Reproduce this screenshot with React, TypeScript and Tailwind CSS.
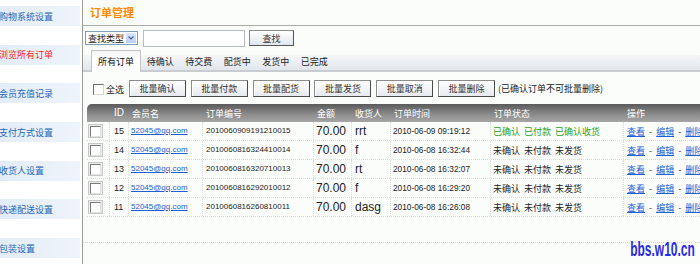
import React from 'react';

const side = ['购物系统设置', '浏览所有订单', '会员充值记录', '支付方式设置', '收货人设置', '快递配送设置', '包装设置'];
const tabs = ['待确认', '待交费', '配货中', '发货中', '已完成'];
const btns = ['批量确认', '批量付款', '批量配货', '批量发货', '批量取消', '批量删除'];
const heads = ['', 'ID', '会员名', '订单编号', '金额', '收货人', '订单时间', '订单状态', '操作'];
const rows = [
  { id: 15, no: '2010060909191210015', name: 'rrt', time: '2010-06-09 09:19:12', done: true },
  { id: 14, no: '2010060816324410014', name: 'f', time: '2010-06-08 16:32:44', done: false },
  { id: 13, no: '2010060816320710013', name: 'rt', time: '2010-06-08 16:32:07', done: false },
  { id: 12, no: '2010060816292010012', name: 'f', time: '2010-06-08 16:29:20', done: false },
  { id: 11, no: '2010060816260810011', name: 'dasg', time: '2010-06-08 16:26:08', done: false },
];

const cols = 'grid grid-cols-[23px_19px_74px_111px_38px_39px_100px_133px_76px]';
const cell = 'h-full flex items-center border-r border-dotted border-[#dcdcdc] overflow-hidden whitespace-nowrap';

function RowBox() {
  return (
    <span className="flex h-[14px] w-[15px] items-center justify-center border border-[#c8c8c8] bg-[#ececec]">
      <span className="block h-[11px] w-[11px] border border-t-[#7a7a7a] border-l-[#7a7a7a] border-b-[#e0e0e0] border-r-[#e0e0e0] bg-white" />
    </span>
  );
}

export default function App() {
  return (
    <div className="relative flex h-[264px] w-[700px] overflow-hidden bg-[#fbfdfb] font-['Liberation_Sans','Noto_Sans_CJK_SC',sans-serif] text-[#222]">
      {/* sidebar */}
      <div className="flex w-[83px] shrink-0 flex-col gap-[18.7px] border-r border-[#9a9a9a] bg-white pt-[6px]">
        {side.map((s, i) => (
          <div
            key={s}
            className={`flex h-[20px] w-[80px] items-center bg-[linear-gradient(to_right,#e3ecf6,#eef4fa)] text-[9px] leading-none ${
              i === 1 ? 'text-[#ff1a1a]' : 'text-[#2566b8]'
            }`}
          >
            <span className="-ml-[1px] font-['Noto_Sans_CJK_SC',sans-serif]">{s}</span>
          </div>
        ))}
      </div>

      {/* main */}
      <div className="flex min-w-0 flex-1 flex-col">
        <div className="flex h-[26px] items-center border-b border-[#ababab] pl-[7px]">
          <span className="font-['Noto_Sans_CJK_SC',sans-serif] text-[11px] font-semibold leading-none text-[#ff8a00]">订单管理</span>
        </div>

        {/* search */}
        <div className="flex h-[24px] items-center pl-[2px] font-['Noto_Sans_CJK_SC',sans-serif] text-[9px] leading-none">
          <div className="flex h-[14px] w-[53px] items-center justify-between border border-[#7f9db9] bg-white pl-[2px] pr-[1px]">
            <span>查找类型</span>
            <span className="flex h-[10px] w-[10px] items-center justify-center bg-[linear-gradient(to_bottom,#dbe6fb,#b9cdf5)]">
              <svg width="6" height="4" viewBox="0 0 6 4">
                <path d="M0.5 0.5 L3 3 L5.5 0.5" fill="none" stroke="#4d6185" strokeWidth="1.2" />
              </svg>
            </span>
          </div>
          <div className="ml-[5px] h-[17px] w-[102px] border border-[#b8bec6] bg-white" />
          <div className="ml-[4px] flex h-[16px] w-[45px] items-center justify-center border border-[#8a8a8a] border-b-[#555] border-r-[#555] bg-[linear-gradient(to_bottom,#ffffff,#dfe6ee)] text-[#333]">
            查找
          </div>
        </div>

        {/* tabs */}
        <div className="flex h-[22px] items-end border-b-2 border-[#c8ccd1] bg-[linear-gradient(to_bottom,transparent_5px,#f6f7f9_5px,#e1e6ec)] pl-[8px] font-['Noto_Sans_CJK_SC',sans-serif] text-[9px] leading-none">
          <div className="-mb-[2px] flex h-[22px] items-center border border-b-0 border-[#c2c2c2] bg-[linear-gradient(to_bottom,#f4f4f4,#ffffff_40%)] px-[6px] text-[#111]">
            所有订单
          </div>
          {tabs.map((t) => (
            <div key={t} className="flex h-[18px] items-center px-[5.75px] text-[#222]">
              {t}
            </div>
          ))}
        </div>

        {/* batch buttons */}
        <div className="flex h-[32px] items-start pl-[10px] pt-[8px] font-['Noto_Sans_CJK_SC',sans-serif] text-[9px] leading-none">
          <div className="mt-[4px] flex items-center">
            <span className="block h-[11px] w-[11px] border border-t-[#6e6e6e] border-l-[#6e6e6e] border-b-[#d8d8d8] border-r-[#d8d8d8] bg-white" />
            <span className="ml-[2px]">全选</span>
          </div>
          <div className="ml-[5px] flex gap-[4.8px]">
            {btns.map((b) => (
              <div
                key={b}
                className="flex h-[17px] w-[57px] items-center justify-center border border-[#8c8c8c] border-b-[#4a4a4a] border-r-[#4a4a4a] bg-[linear-gradient(to_bottom,#ffffff,#e6e9ee)] text-[#333] shadow-[inset_1px_1px_0_#fff]"
              >
                {b}
              </div>
            ))}
          </div>
          <span className="ml-[3px] mt-[4px] text-[#222]">(已确认订单不可批量删除)</span>
        </div>

        {/* table */}
        <div className="ml-[4px]">
          <div className={`${cols} h-[18px] rounded-tl-[5px] bg-[linear-gradient(to_bottom,#5a5a5a,#8a8a8a_55%,#a6a6a6)] font-['Noto_Sans_CJK_SC',sans-serif] text-[9px] leading-none text-white`}>
            {heads.map((h, i) => (
              <div key={i} className={`flex h-full items-center ${i === 1 ? "pl-[4px] font-['Liberation_Sans',sans-serif] text-[10px]" : 'pl-[3px]'}`}>
                {h}
              </div>
            ))}
          </div>
          {rows.map((r) => (
            <div key={r.id} className={`${cols} h-[19px] border-b border-dotted border-[#dcdcdc] leading-none`}>
              <div className={`${cell} pl-[1px]`}>
                <RowBox />
              </div>
              <div className={`${cell} pl-[4px] text-[9px] text-[#222]`}>{r.id}</div>
              <div className={`${cell} pl-[2px]`}>
                <span className="text-[8px] text-[#1e5fd2] underline">52045@qq.com</span>
              </div>
              <div className={`${cell} pl-[3px] text-[8px]`}>{r.no}</div>
              <div className={`${cell} pl-[2px] text-[12px]`}>70.00</div>
              <div className={`${cell} pl-[3px] text-[12px]`}>{r.name}</div>
              <div className={`${cell} pl-[2px] text-[8.3px]`}>{r.time}</div>
              <div className={`${cell} gap-[4px] pl-[2px] font-['Noto_Sans_CJK_SC',sans-serif] text-[9px] ${r.done ? 'text-[#1f9f1f]' : 'text-[#222]'}`}>
                {r.done ? (
                  <>
                    <span>已确认</span>
                    <span>已付款</span>
                    <span>已确认收货</span>
                  </>
                ) : (
                  <>
                    <span>未确认</span>
                    <span>未付款</span>
                    <span>未发货</span>
                  </>
                )}
              </div>
              <div className="flex h-full items-center gap-[4px] overflow-hidden whitespace-nowrap pl-[3px] font-['Noto_Sans_CJK_SC',sans-serif] text-[9px]">
                <span className="text-[#1e5fd2] underline">查看</span>
                <span className="text-[#333]">-</span>
                <span className="text-[#1e5fd2] underline">编辑</span>
                <span className="text-[#333]">-</span>
                <span className="text-[#1e5fd2] underline">删除</span>
              </div>
            </div>
          ))}
        </div>
        <div className="h-[26px] border-b border-dotted border-[#d6d6d6]" />
      </div>

      <span className="absolute bottom-[5px] right-[5px] origin-right scale-x-[0.6] font-['Liberation_Sans',sans-serif] text-[20px] font-bold leading-none text-[#2a2ae6]">
        bbs.w10.cn
      </span>
    </div>
  );
}
